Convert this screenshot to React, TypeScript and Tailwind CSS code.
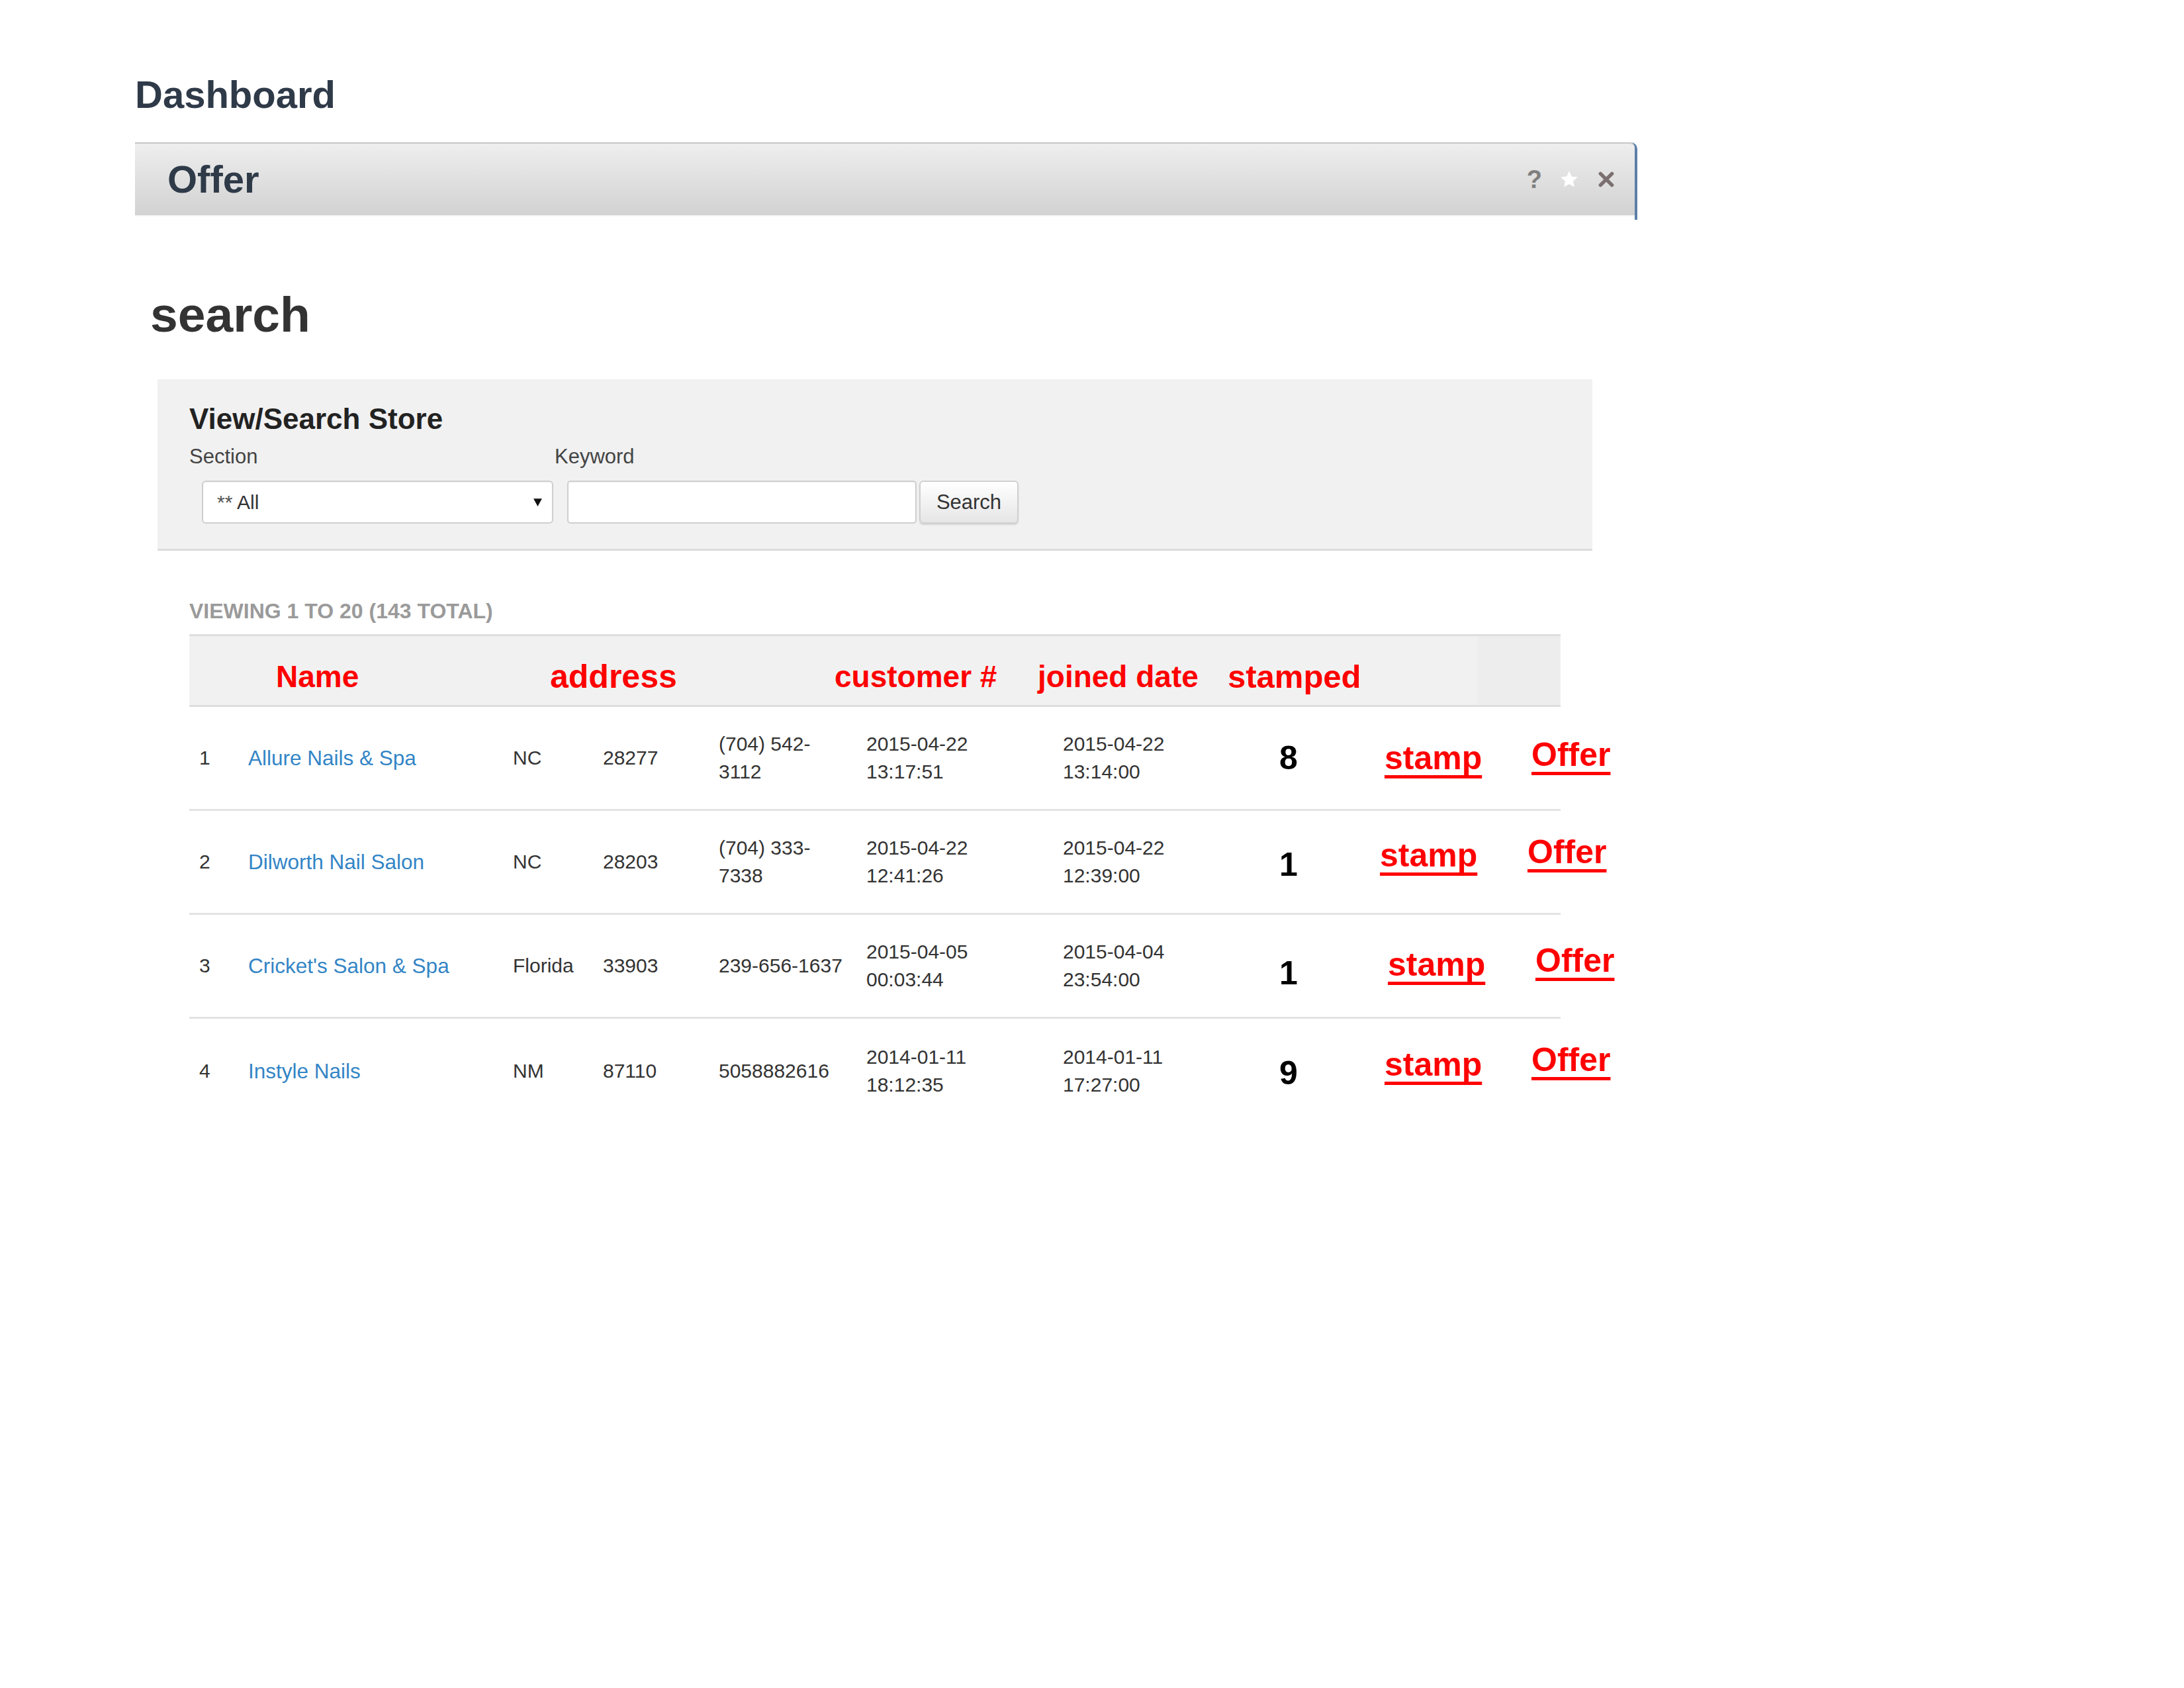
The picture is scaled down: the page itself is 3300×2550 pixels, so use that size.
import React from 'react';

type Row = {
  idx: string;
  name: string;
  state: string;
  zip: string;
  phone: string[];
  joined: string[];
  created: string[];
  count: string;
  countPad: string;
  stampPad: string;
  stampShift: string;
  offerPad: string;
  offerShift: string;
};

const rows: Row[] = [
  {
    idx: '1',
    name: 'Allure Nails & Spa',
    state: 'NC',
    zip: '28277',
    phone: ['(704) 542-', '3112'],
    joined: ['2015-04-22', '13:17:51'],
    created: ['2015-04-22', '13:14:00'],
    count: '8',
    countPad: 'pt-0',
    stampPad: 'pb-0',
    stampShift: 'ml-0',
    offerPad: 'pb-[10px]',
    offerShift: 'ml-0',
  },
  {
    idx: '2',
    name: 'Dilworth Nail Salon',
    state: 'NC',
    zip: '28203',
    phone: ['(704) 333-', '7338'],
    joined: ['2015-04-22', '12:41:26'],
    created: ['2015-04-22', '12:39:00'],
    count: '1',
    countPad: 'pt-[8px]',
    stampPad: 'pb-[20px]',
    stampShift: 'ml-[-7px]',
    offerPad: 'pb-[30px]',
    offerShift: 'ml-[-6px]',
  },
  {
    idx: '3',
    name: "Cricket's Salon & Spa",
    state: 'Florida',
    zip: '33903',
    phone: ['239-656-1637'],
    joined: ['2015-04-05', '00:03:44'],
    created: ['2015-04-04', '23:54:00'],
    count: '1',
    countPad: 'pt-[22px]',
    stampPad: 'pb-[4px]',
    stampShift: 'ml-[5px]',
    offerPad: 'pb-[16px]',
    offerShift: 'ml-[6px]',
  },
  {
    idx: '4',
    name: 'Instyle Nails',
    state: 'NM',
    zip: '87110',
    phone: ['5058882616'],
    joined: ['2014-01-11', '18:12:35'],
    created: ['2014-01-11', '17:27:00'],
    count: '9',
    countPad: 'pt-[6px]',
    stampPad: 'pb-[20px]',
    stampShift: 'ml-0',
    offerPad: 'pb-[34px]',
    offerShift: 'ml-0',
  },
];

function Lines({ items }: { items: string[] }) {
  return (
    <div>
      {items.map((t) => (
        <div key={t}>{t}</div>
      ))}
    </div>
  );
}

function TableRow({ row, last }: { row: Row; last: boolean }) {
  return (
    <div
      className={`flex h-[157px] w-[2072px] items-center text-[30px] leading-[42px] text-[#333] ${
        last ? '' : 'border-b-[3px] border-[#e3e3e3]'
      }`}
    >
      <div className="w-[89px] shrink-0 pl-[15px]">{row.idx}</div>
      <div className="w-[400px] shrink-0 text-[31.5px] text-[#3385c6]">{row.name}</div>
      <div className="w-[136px] shrink-0">{row.state}</div>
      <div className="w-[175px] shrink-0">{row.zip}</div>
      <div className="w-[223px] shrink-0">
        <Lines items={row.phone} />
      </div>
      <div className="w-[297px] shrink-0">
        <Lines items={row.joined} />
      </div>
      <div className="w-[294px] shrink-0">
        <Lines items={row.created} />
      </div>
      <div className={`flex h-full w-[94px] shrink-0 items-center justify-center ${row.countPad}`}>
        <span className="text-[50px] font-bold leading-none text-black">{row.count}</span>
      </div>
      <div className="w-[98px] shrink-0" />
      <div className={`flex h-full w-[222px] shrink-0 items-center ${row.stampPad}`}>
        <a
          href="#"
          className={`text-[50px] font-bold leading-none text-[#ff0000] underline decoration-[5px] underline-offset-[9px] [text-decoration-skip-ink:none] ${row.stampShift}`}
        >
          stamp
        </a>
      </div>
      <div className={`flex h-full w-[160px] shrink-0 items-center ${row.offerPad}`}>
        <a
          href="#"
          className={`text-[50px] font-bold leading-none text-[#ff0000] underline decoration-[5px] underline-offset-[9px] [text-decoration-skip-ink:none] ${row.offerShift}`}
        >
          Offer
        </a>
      </div>
    </div>
  );
}

export default function App() {
  return (
    <div className="min-h-[2550px] w-[3300px] bg-white pl-[204px] pt-[114px] font-['Liberation_Sans',Arial,sans-serif]">
      {/* Page title */}
      <h1 className="text-[58px] font-bold leading-none text-[#2f3a49]">Dashboard</h1>

      {/* Widget bar */}
      <div className="mt-[43px] w-[2270px] rounded-tr-[10px] border-r-4 border-[#5b7fa8] pb-[7px]">
        <div className="flex h-[110px] items-center justify-between rounded-tr-[8px] border-t-2 border-[#c6c6c6] bg-gradient-to-b from-[#eeeeee] to-[#d2d2d2] pl-[49px] pr-[30px] shadow-[0_2px_0_#f4f4f4]">
          <h2 className="text-[58px] font-bold leading-none text-[#2f3a49]">Offer</h2>
          <div className="flex items-center">
            <span className="text-[38px] font-bold leading-none text-[#7f7f7f]">?</span>
            <svg viewBox="0 0 24 24" className="ml-[26px] h-[30px] w-[30px]">
              <path
                d="M12 1.8l3 6.6 7.2.8-5.4 4.9 1.5 7.1L12 17.6l-6.3 3.6 1.5-7.1L1.8 9.2 9 8.4z"
                fill="#ffffff"
              />
            </svg>
            <svg viewBox="0 0 24 24" className="ml-[28px] h-[26px] w-[26px]">
              <path d="M4 4l16 16M20 4L4 20" stroke="#7b6f6f" strokeWidth="5" strokeLinecap="round" />
            </svg>
          </div>
        </div>
      </div>

      <h2 className="ml-[23px] mt-[106px] text-[75px] font-bold leading-none text-[#333]">search</h2>

      {/* Search panel */}
      <div className="ml-[34px] mt-[60px] w-[2168px] border-b-[3px] border-[#dcdcdc] bg-[#f1f1f1] pb-[38px] pl-[48px] pt-[38px]">
        <h3 className="text-[44px] font-bold leading-none text-[#222]">View/Search Store</h3>
        <div className="mt-[19px] flex text-[31px] leading-none text-[#444]">
          <div className="w-[552px]">Section</div>
          <div>Keyword</div>
        </div>
        <div className="ml-[19px] mt-[21px] flex items-center">
          <div className="flex h-[65px] w-[531px] items-center justify-between rounded-[6px] border-2 border-[#cfcfcf] bg-white pl-[21px] pr-[14px] shadow-[inset_0_1px_2px_rgba(0,0,0,0.06)]">
            <span className="text-[30px] leading-none text-[#333]">
              <span className="text-[#555]">**</span> All
            </span>
            <svg viewBox="0 0 14 14" className="h-[15px] w-[15px]">
              <path d="M1 2h12L7 13z" fill="#111" />
            </svg>
          </div>
          <div className="ml-[21px] h-[65px] w-[528px] rounded-[5px] border-2 border-[#cfcfcf] bg-white shadow-[inset_0_1px_2px_rgba(0,0,0,0.06)]" />
          <button className="ml-[4px] flex h-[65px] w-[150px] items-center justify-center rounded-[6px] border-2 border-[#d0d0d0] bg-gradient-to-b from-white to-[#e6e6e6] text-[31px] leading-none text-[#333] shadow-[0_2px_2px_rgba(0,0,0,0.12)]">
            Search
          </button>
        </div>
      </div>

      {/* Listing */}
      <div className="ml-[82px] mt-[75px]">
        <div className="text-[32px] font-bold leading-none text-[#9a9a9a]">VIEWING 1 TO 20 (143 TOTAL)</div>

        <div className="mt-[19px] flex h-[110px] w-[2072px] border-y-[3px] border-[#dedede] bg-[#f1f1f1]">
          <div className="flex flex-1 items-center pt-[18px] font-bold leading-none text-[#ff0000]">
            <div className="w-[545px] pl-[131px] text-[46px]">Name</div>
            <div className="w-[430px] text-[50px]">address</div>
            <div className="w-[307px] text-[46px]">customer #</div>
            <div className="w-[287px] text-[46px]">joined date</div>
            <div className="text-[49px]">stamped</div>
          </div>
          <div className="w-[125px] bg-[#ededed]" />
        </div>

        {rows.map((r, i) => (
          <TableRow key={r.idx} row={r} last={i === rows.length - 1} />
        ))}
      </div>
    </div>
  );
}
